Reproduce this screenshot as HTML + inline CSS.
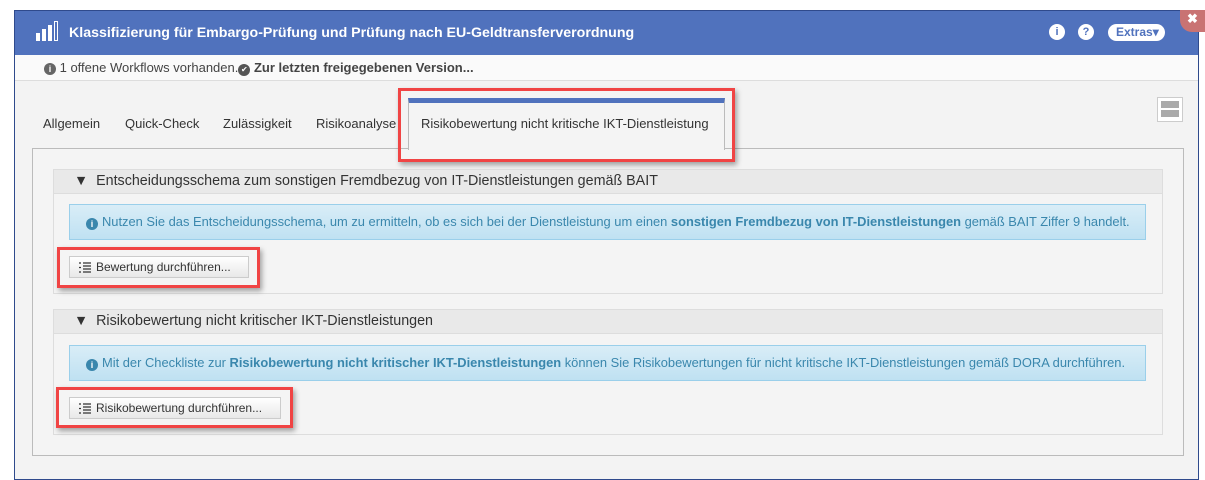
<!DOCTYPE html>
<html><head><meta charset="utf-8"><style>
*{box-sizing:border-box;margin:0;padding:0}
html,body{width:1205px;height:466px}
body{background:#fff;font-family:"Liberation Sans",sans-serif;position:relative;overflow:hidden;font-size:13px;color:#333}
.abs{position:absolute}
.win{left:14px;top:10px;width:1185px;height:470px;border:1px solid #2f4a8c;background:#f3f3f3}
.hdr{left:15px;top:11px;width:1183px;height:44px;background:#5072bd;color:#fff;font-weight:bold;font-size:14.2px}
.sub{left:15px;top:55px;width:1183px;height:26px;background:#fafafa;border-bottom:1px solid #ddd;font-size:13px;color:#444}
.red{border:3px solid #f04444;box-shadow:2px 3px 5px rgba(0,0,0,.35)}
.panelh{background:#e9e9e9;border:1px solid #ddd;height:25px;font-size:14.3px;color:#333;padding-left:20px;line-height:23px}
.info{background:linear-gradient(#d9edf7,#bfe1f2);border:1px solid #9acfea;color:#3a87ad;font-size:12.9px;line-height:33px;padding-left:16px;white-space:nowrap}
.btn{background:linear-gradient(#fff,#e8e8e8);border:1px solid #ccc;font-size:12px;line-height:20px;padding-left:26px;color:#333}
.ic{width:16px;height:16px;border-radius:50%;background:#fff;color:#5072bd;font-size:11px;text-align:center;line-height:16px}
.ii{display:inline-block;width:12px;height:12px;border-radius:50%;background:#3a87ad;color:#fff;font-size:9px;text-align:center;line-height:12px;font-weight:bold;vertical-align:-1px;margin-right:4px}
.li{position:absolute;left:9px;top:5px;width:12px;height:11px}
</style></head><body>
<div class="abs win"></div>
<div class="abs hdr">
 <div class="abs" style="left:21px;top:22px;width:4px;height:8px;background:#fff"></div>
 <div class="abs" style="left:27px;top:18px;width:4px;height:12px;background:#fff"></div>
 <div class="abs" style="left:33px;top:14px;width:4px;height:16px;background:#fff"></div>
 <div class="abs" style="left:39px;top:10px;width:4px;height:20px;border:1px solid #fff"></div>
 <div class="abs" style="left:54px;top:14px">Klassifizierung für Embargo-Prüfung und Prüfung nach EU-Geldtransferverordnung</div>
 <div class="abs ic" style="left:1034px;top:13px;font-weight:bold">i</div>
 <div class="abs ic" style="left:1063px;top:13px;font-weight:bold">?</div>
 <div class="abs" style="left:1093px;top:13px;width:57px;height:17px;border-radius:9px;background:#fff;color:#5072bd;font-size:12px;line-height:17px;padding-left:8px">Extras&#9662;</div>
</div>
<div class="abs" style="left:1180px;top:10px;width:28px;height:22px;background:#c97373;border-radius:0 0 0 12px;color:#fff;font-weight:bold;font-size:13px;padding-left:7px;line-height:18px">✖</div>
<div class="abs sub"><span class="abs" style="left:29px;top:5px"><span style="display:inline-block;width:12px;height:12px;border-radius:50%;background:#666;color:#fff;font-size:9px;text-align:center;line-height:12px;font-weight:bold">i</span> 1 offene Workflows vorhanden.<span style="display:inline-block;width:12px;height:12px;border-radius:50%;background:#555;color:#fff;font-size:8px;text-align:center;line-height:12px">✔</span> <b>Zur letzten freigegebenen Version...</b></span></div>
<div class="abs" style="top:116px;left:43px;font-size:13px;color:#333">Allgemein</div>
<div class="abs" style="top:116px;left:125px;font-size:13px">Quick-Check</div>
<div class="abs" style="top:116px;left:223px;font-size:13px">Zulässigkeit</div>
<div class="abs" style="top:116px;left:316px;font-size:13px">Risikoanalyse</div>
<div class="abs" style="left:32px;top:148px;width:1152px;height:308px;border:1px solid #bbb;background:#f4f4f4"></div>
<div class="abs" style="left:408px;top:98px;width:317px;height:52px;background:#f4f4f4;border:1px solid #bbb;border-bottom:none;border-top:5px solid #5072bd"></div>
<div class="abs" style="top:116px;left:421px;font-size:13px">Risikobewertung nicht kritische IKT-Dienstleistung</div>
<div class="abs red" style="left:398px;top:88px;width:337px;height:74px"></div>
<div class="abs" style="left:1157px;top:97px;width:26px;height:25px;border:1px solid #ccc;background:#fff"><div class="abs" style="left:3px;top:3px;width:18px;height:7px;background:#aaa"></div><div class="abs" style="left:3px;top:12px;width:18px;height:7px;background:#aaa"></div></div>

<div class="abs" style="left:53px;top:169px;width:1110px;height:125px;border:1px solid #ddd;background:#f4f4f4"></div>
<div class="abs panelh" style="left:53px;top:169px;width:1110px">&#9660;&nbsp; Entscheidungsschema zum sonstigen Fremdbezug von IT-Dienstleistungen gemäß BAIT</div>
<div class="abs info" style="left:69px;top:204px;width:1077px;height:36px"><span class="ii">i</span>Nutzen Sie das Entscheidungsschema, um zu ermitteln, ob es sich bei der Dienstleistung um einen <b>sonstigen Fremdbezug von IT-Dienstleistungen</b> gemäß BAIT Ziffer 9 handelt.</div>
<div class="abs btn" style="left:69px;top:256px;width:180px;height:22px"><svg class="li" viewBox="0 0 12 11"><path d="M0 1h2M0 5.5h2M0 10h2M4 1h8M4 4h8M4 7h8M4 10h8" stroke="#333" stroke-width="1.3"/></svg>Bewertung durchführen...</div>
<div class="abs red" style="left:57px;top:247px;width:203px;height:41px"></div>

<div class="abs" style="left:53px;top:309px;width:1110px;height:126px;border:1px solid #ddd;background:#f4f4f4"></div>
<div class="abs panelh" style="left:53px;top:309px;width:1110px">&#9660;&nbsp; Risikobewertung nicht kritischer IKT-Dienstleistungen</div>
<div class="abs info" style="left:69px;top:345px;width:1077px;height:36px"><span class="ii">i</span>Mit der Checkliste zur <b>Risikobewertung nicht kritischer IKT-Dienstleistungen</b> können Sie Risikobewertungen für nicht kritische IKT-Dienstleistungen gemäß DORA durchführen.</div>
<div class="abs btn" style="left:69px;top:397px;width:212px;height:22px"><svg class="li" viewBox="0 0 12 11"><path d="M0 1h2M0 5.5h2M0 10h2M4 1h8M4 4h8M4 7h8M4 10h8" stroke="#333" stroke-width="1.3"/></svg>Risikobewertung durchführen...</div>
<div class="abs red" style="left:56px;top:387px;width:237px;height:41px"></div>
</body></html>
